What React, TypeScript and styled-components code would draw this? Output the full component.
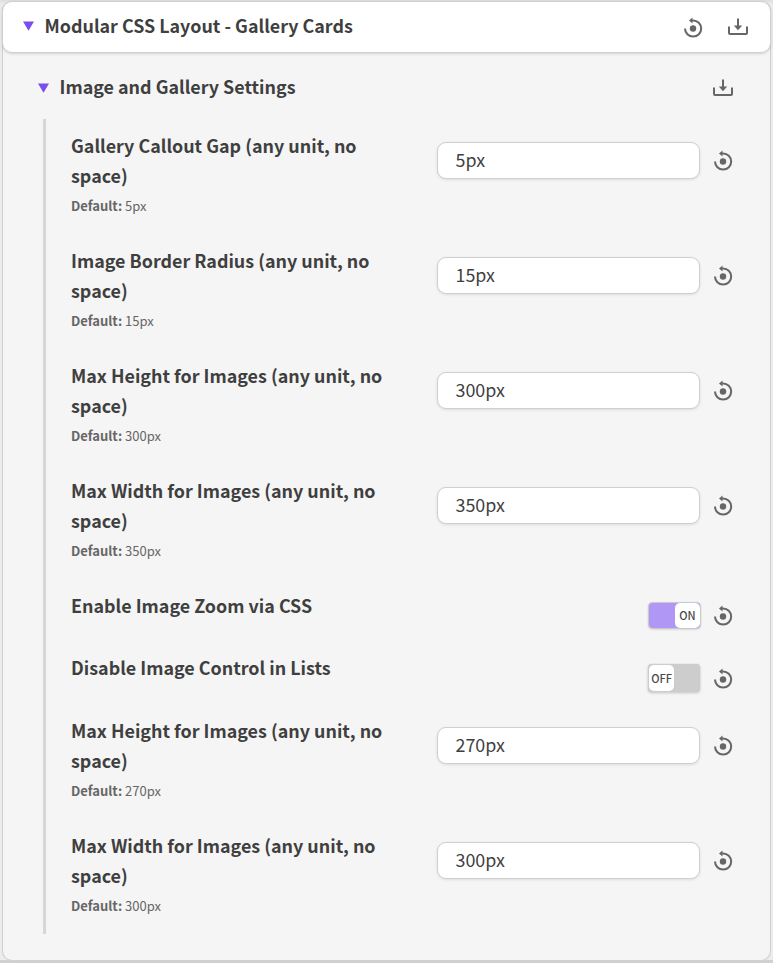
import React from "react";
import styled, { createGlobalStyle } from "styled-components";

const Global = createGlobalStyle`
  *, *::before, *::after { box-sizing: border-box; }
  body {
    margin: 0;
    background: #ececec;
    color: #3f3f3f;
    font-family: "Noto Sans CJK SC", "Noto Sans", sans-serif;
    overflow: hidden;
  }
`;

const Page = styled.main`
  height: 963px;
  padding: 1px 2px 0;
  border-bottom: 3px solid #d0d0d0;
  background: linear-gradient(#dedede 0, #ececec 4px);
`;

const Panel = styled.section`
  width: 769px;
  height: 960px;
  background: #f5f5f5;
  border: 1px solid #cfcfcf;
  border-top: 0;
  border-radius: 10px;
`;

const PanelHeader = styled.header`
  display: flex;
  align-items: center;
  width: 769px;
  height: 52px;
  margin-left: -1px;
  padding: 0 22px 2px 20px;
  background: #fff;
  border: 1px solid #cfcfcf;
  border-radius: 10px;
  box-shadow: 0 1px 3px rgba(0, 0, 0, 0.14);
`;

const SectionHeader = styled.div`
  display: flex;
  align-items: center;
  height: 65.5px;
  padding: 4px 37px 0 35px;
`;

const Title = styled.h2`
  flex: 1;
  margin: 0 0 0 10.5px;
  padding-bottom: 2px;
  font-size: 17.9px;
  line-height: 29px;
  font-weight: 700;
  white-space: nowrap;
`;

const Actions = styled.div`
  display: flex;
  align-items: center;
  gap: 25px;
  padding-top: 2px;
`;

const Svg = styled.svg`
  display: block;
  flex: none;
`;

const Settings = styled.div`
  margin-left: 40px;
  border-left: 3px solid #d6d6d6;
`;

const Row = styled.div<{ $compact?: boolean }>`
  display: flex;
  align-items: flex-start;
  height: ${(p) => (p.$compact ? 62.5 : 115)}px;
  padding: 11.5px 37px 0 25px;
`;

const Description = styled.div`
  flex: 1;
`;

const Label = styled.div<{ $raise: boolean }>`
  width: 330px;
  margin-top: ${(p) => (p.$raise ? -0.6 : 0)}px;
  font-size: 17.9px;
  line-height: 30px;
  font-weight: 700;
`;

const Default = styled.div`
  margin-top: 1px;
  font-size: 13px;
  line-height: 30px;
  color: #666;
`;

const Control = styled.div`
  display: flex;
  align-items: center;
  gap: 13px;
  margin-top: 11.5px;
`;

const Input = styled.input`
  width: 263px;
  height: 37px;
  padding: 0 17.5px 2px;
  border: 1px solid #cfcfcf;
  border-radius: 9px;
  background: #fff;
  box-shadow: 0 1px 3px rgba(0, 0, 0, 0.1);
  color: #3f3f3f;
  font: 17.9px "Noto Sans CJK SC", "Noto Sans", sans-serif;
  outline: none;
`;

const Toggle = styled.button<{ $on: boolean }>`
  display: flex;
  justify-content: ${(p) => (p.$on ? "flex-end" : "flex-start")};
  width: ${(p) => (p.$on ? 51 : 52)}px;
  height: ${(p) => (p.$on ? 25 : 28)}px;
  margin-top: ${(p) => (p.$on ? 1 : 0)}px;
  padding: ${(p) => (p.$on ? "0" : "1px")};
  border: 0;
  border-radius: 4px;
  background: ${(p) => (p.$on ? "#b197f5" : "#cdcdcd")};
  box-shadow: 0 0 1px ${(p) => (p.$on ? 0.5 : 0)}px #c8c8c8, 0 1px 3px rgba(0, 0, 0, 0.2);
`;

const Knob = styled.span`
  display: flex;
  align-items: center;
  justify-content: center;
  width: 25px;
  height: 100%;
  border-radius: 5px;
  background: #fff;
  color: #4a4a4a;
  font: 500 11px "Noto Sans CJK SC", "Noto Sans", sans-serif;
`;

const Triangle = () => (
  <Svg width="11" height="10" viewBox="0 0 11 10">
    <path d="M0 .5h11L5.500 9.800z" fill="#7c4dee" />
  </Svg>
);

const ResetIcon = () => (
  <Svg width="20" height="24" viewBox="0 0 20 24">
    <path d="M2 13.500A8.100 8.100 0 1 0 10 5.400Q9 5.400 8 5.600" fill="none" stroke="#666" strokeWidth="2" />
    <path d="M6 5.400 9.500 2.500v6z" fill="#666" />
    <circle cx="10" cy="13.500" r="3.200" fill="#666" />
  </Svg>
);

const DownloadIcon = () => (
  <Svg width="20" height="20" viewBox="0 0 20 20">
    <path d="M1 9.500V16q0 1 1 1h16q1 0 1-1V9.500M10 1.500v10" fill="none" stroke="#666" strokeWidth="2" />
    <path d="M5.800 8.500h8.400L10 13.200z" fill="#666" />
  </Svg>
);

type Setting = { label: string; value?: string; on?: boolean };

const settings: Setting[] = [
  { label: "Gallery Callout Gap (any unit, no space)", value: "5px" },
  { label: "Image Border Radius (any unit, no space)", value: "15px" },
  { label: "Max Height for Images (any unit, no space)", value: "300px" },
  { label: "Max Width for Images (any unit, no space)", value: "350px" },
  { label: "Enable Image Zoom via CSS", on: true },
  { label: "Disable Image Control in Lists", on: false },
  { label: "Max Height for Images (any unit, no space)", value: "270px" },
  { label: "Max Width for Images (any unit, no space)", value: "300px" },
];

const SettingRow = ({ label, value, on }: Setting) => (
  <Row $compact={value === undefined}>
    <Description>
      <Label $raise={on === false}>{label}</Label>
      {value !== undefined && (
        <Default>
          <b>Default:</b> {value}
        </Default>
      )}
    </Description>
    <Control>
      {value !== undefined ? (
        <Input defaultValue={value} />
      ) : (
        <Toggle $on={!!on}>
          <Knob>{on ? "ON" : "OFF"}</Knob>
        </Toggle>
      )}
      <ResetIcon />
    </Control>
  </Row>
);

export default function App() {
  return (
    <>
      <Global />
      <Page>
        <Panel>
          <PanelHeader>
            <Triangle />
            <Title>Modular CSS Layout - Gallery Cards</Title>
            <Actions>
              <ResetIcon />
              <DownloadIcon />
            </Actions>
          </PanelHeader>
          <SectionHeader>
            <Triangle />
            <Title>Image and Gallery Settings</Title>
            <DownloadIcon />
          </SectionHeader>
          <Settings>
            {settings.map((s, i) => (
              <SettingRow key={i} {...s} />
            ))}
          </Settings>
        </Panel>
      </Page>
    </>
  );
}
